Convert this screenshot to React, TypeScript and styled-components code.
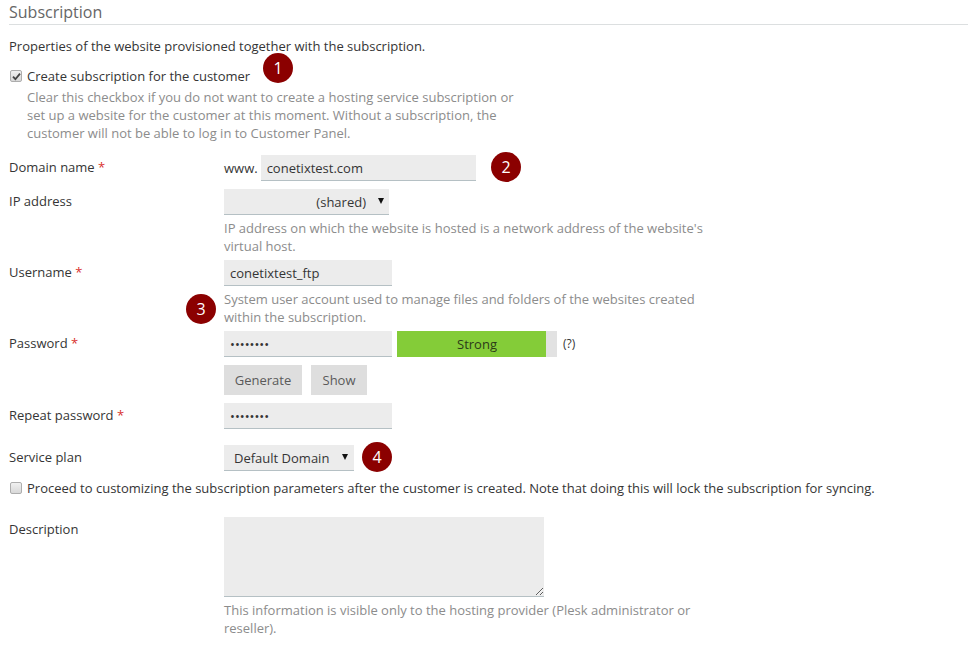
import React from 'react';
import styled, { createGlobalStyle } from 'styled-components';

const GlobalStyle = createGlobalStyle`
  html, body {
    margin: 0;
    padding: 0;
    background: #fff;
  }
  body {
    font-family: "Open Sans", "Liberation Sans", sans-serif;
    font-size: 13px;
    line-height: 18px;
    color: #353535;
  }
`;

const Page = styled.div`
  position: relative;
  width: 968px;
  height: 647px;
  overflow: hidden;
  padding: 0 0 0 9px;
  box-sizing: border-box;
`;

const Heading = styled.h2`
  margin: 0;
  height: 24px;
  font-size: 16px;
  font-weight: 400;
  line-height: 24px;
  color: #666;
  border-bottom: 1px solid #dcdfe0;
`;

const Intro = styled.p`
  margin: 12px 0 0;
`;

const CheckRow = styled.label<{ $top: number }>`
  display: flex;
  align-items: center;
  gap: 5px;
  height: 18px;
  margin-top: ${(p) => p.$top}px;
`;

const CheckBox = styled.span`
  display: flex;
  align-items: center;
  justify-content: center;
  width: 10px;
  height: 10px;
  margin-left: 1px;
  border: 1px solid #adadad;
  border-radius: 2px;
  background: linear-gradient(#f0f0f0, #d8d8d8);
`;

const CheckHint = styled.div`
  width: 500px;
  margin: 3px 0 0 18px;
  color: #8c8c8c;
`;

const FormRow = styled.div<{ $top: number }>`
  display: grid;
  grid-template-columns: 215px 1fr;
  margin-top: ${(p) => p.$top}px;
`;

const Label = styled.div`
  padding-top: 3px;
`;

const Required = styled.span`
  color: #d9302c;
`;

const Controls = styled.div`
  display: flex;
  align-items: center;
`;

const Prefix = styled.span`
  margin-right: 3px;
`;

const TextInput = styled.input<{ $width: number }>`
  width: ${(p) => p.$width}px;
  height: 26px;
  padding: 0 6px;
  box-sizing: border-box;
  border: 0;
  border-bottom: 1px solid #b5c0c4;
  border-radius: 0;
  background: #ececec;
  color: #353535;
  font: inherit;
  outline: none;
`;

const Select = styled.div<{ $width: number; $center?: boolean }>`
  display: flex;
  align-items: center;
  justify-content: ${(p) => (p.$center ? 'flex-end' : 'flex-start')};
  width: ${(p) => p.$width}px;
  height: 26px;
  padding: 0 5px 0 10px;
  box-sizing: border-box;
  border-bottom: 1px solid #b5c0c4;
  background: #ececec;
`;

const SelectValue = styled.span`
  flex: none;
`;

const Arrow = styled.svg<{ $gap: number }>`
  flex: none;
  width: 6px;
  height: 6px;
  margin-left: ${(p) => p.$gap}px;
  margin-top: -1px;
`;

const Hint = styled.div<{ $width: number }>`
  width: ${(p) => p.$width}px;
  margin: 4px 0 0 215px;
  color: #8c8c8c;
`;

const Meter = styled.div<{ $fill: number }>`
  width: 160px;
  height: 26px;
  margin-left: 5px;
  line-height: 26px;
  text-align: center;
  color: #2c3a18;
  background: linear-gradient(to right, #84cc38 ${(p) => p.$fill}px, #e2e2e2 ${(p) => p.$fill}px);
`;

const HelpMark = styled.span`
  margin-left: 6px;
  font-size: 12px;
`;

const ButtonRow = styled.div`
  display: flex;
  gap: 9px;
  margin: 8px 0 0 215px;
`;

const Button = styled.button<{ $width: number }>`
  width: ${(p) => p.$width}px;
  height: 30px;
  padding: 0;
  border: 0;
  background: #dedede;
  color: #5a5a5a;
  font: inherit;
`;

const Description = styled.textarea`
  display: block;
  width: 320px;
  height: 80px;
  padding: 6px;
  box-sizing: border-box;
  border: 0;
  border-bottom: 1px solid #b5c0c4;
  border-radius: 0;
  background: #ececec;
  font: inherit;
  outline: none;
`;

const Badge = styled.div<{ $x: number; $y: number }>`
  position: absolute;
  left: ${(p) => p.$x}px;
  top: ${(p) => p.$y}px;
  width: 30px;
  height: 30px;
  border-radius: 50%;
  background: #8b0000;
  color: #fff;
  font-size: 16px;
  line-height: 30px;
  text-align: center;
`;

const badges = [
  { n: 1, x: 263, y: 53 },
  { n: 2, x: 491, y: 152 },
  { n: 3, x: 186, y: 294 },
  { n: 4, x: 362, y: 442 },
];

const SelectArrow: React.FC<{ gap: number }> = ({ gap }) => (
  <Arrow $gap={gap} viewBox="0 0 6 6">
    <path d="M0 0h6L3 6z" fill="#111" />
  </Arrow>
);

const App: React.FC = () => (
  <Page>
    <GlobalStyle />
    <Heading>Subscription</Heading>
    <Intro>Properties of the website provisioned together with the subscription.</Intro>

    <CheckRow $top={12}>
      <CheckBox>
        <svg width="9" height="9" viewBox="0 0 9 9">
          <path d="M1 4.6 3.4 7.2 8 1.6" fill="none" stroke="#444" strokeWidth="1.8" />
        </svg>
      </CheckBox>
      Create subscription for the customer
    </CheckRow>
    <CheckHint>
      Clear this checkbox if you do not want to create a hosting service subscription or set up a
      website for the customer at this moment. Without a subscription, the customer will not be
      able to log in to Customer Panel.
    </CheckHint>

    <FormRow $top={13}>
      <Label>
        Domain name <Required>*</Required>
      </Label>
      <Controls>
        <Prefix>www.</Prefix>
        <TextInput $width={215} value="conetixtest.com" readOnly />
      </Controls>
    </FormRow>

    <FormRow $top={8}>
      <Label>IP address</Label>
      <Select $width={165} $center>
        <SelectValue>(shared)</SelectValue>
        <SelectArrow gap={12} />
      </Select>
    </FormRow>
    <Hint $width={500}>
      IP address on which the website is hosted is a network address of the website's virtual host.
    </Hint>

    <FormRow $top={5}>
      <Label>
        Username <Required>*</Required>
      </Label>
      <TextInput $width={168} value="conetixtest_ftp" readOnly />
    </FormRow>
    <Hint $width={500}>
      System user account used to manage files and folders of the websites created within the
      subscription.
    </Hint>

    <FormRow $top={5}>
      <Label>
        Password <Required>*</Required>
      </Label>
      <Controls>
        <TextInput $width={168} type="password" value="password" readOnly />
        <Meter $fill={149}>Strong</Meter>
        <HelpMark>(?)</HelpMark>
      </Controls>
    </FormRow>
    <ButtonRow>
      <Button $width={78}>Generate</Button>
      <Button $width={56}>Show</Button>
    </ButtonRow>

    <FormRow $top={8}>
      <Label>
        Repeat password <Required>*</Required>
      </Label>
      <TextInput $width={168} type="password" value="password" readOnly />
    </FormRow>

    <FormRow $top={16}>
      <Label>Service plan</Label>
      <Select $width={130}>
        <SelectValue>Default Domain</SelectValue>
        <SelectArrow gap={13} />
      </Select>
    </FormRow>

    <CheckRow $top={8}>
      <CheckBox />
      Proceed to customizing the subscription parameters after the customer is created. Note that
      doing this will lock the subscription for syncing.
    </CheckRow>

    <FormRow $top={20}>
      <Label>Description</Label>
      <Description readOnly />
    </FormRow>
    <Hint $width={500}>
      This information is visible only to the hosting provider (Plesk administrator or reseller).
    </Hint>

    {badges.map((b) => (
      <Badge key={b.n} $x={b.x} $y={b.y}>
        {b.n}
      </Badge>
    ))}
  </Page>
);

export default App;
